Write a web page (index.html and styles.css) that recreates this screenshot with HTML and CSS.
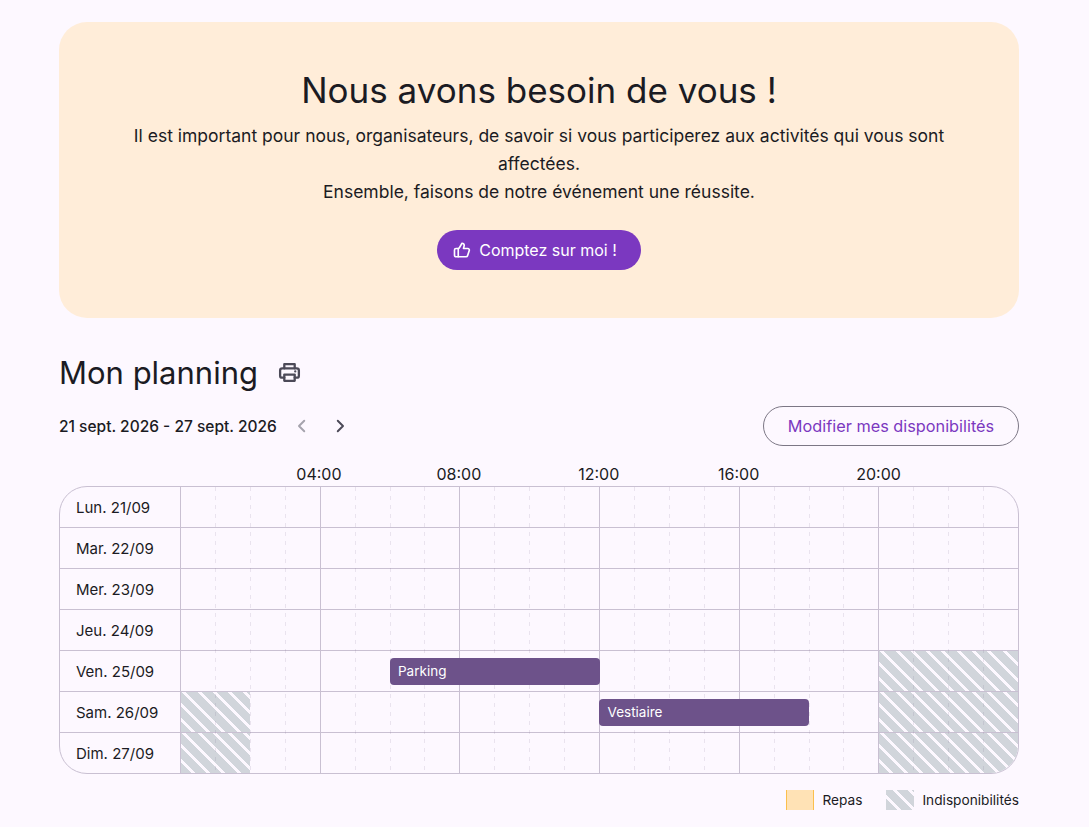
FILE: index.html
```html
<!DOCTYPE html>
<html lang="fr">
<head>
	<meta charset="utf-8" />
	<title>Mon planning</title>
	<link rel="stylesheet" href="styles.css">
</head>
<body>
	<div class="page">
		<section class="hero">
			<h2>Nous avons besoin de vous !</h2>
			<p>Il est important pour nous, organisateurs, de savoir si vous participerez aux activités qui vous sont affectées.<br>Ensemble, faisons de notre événement une réussite.</p>
			<button class="btn-primary" type="button">
				<svg viewBox="0 0 24 24" width="18" height="18" fill="none" stroke="currentColor" stroke-width="2.2" stroke-linecap="round" stroke-linejoin="round"><path d="M7 10v11"/><path d="M15 5.9 14 10h5.8a2 2 0 0 1 1.9 2.6l-2.3 7a2 2 0 0 1-1.9 1.4H4a2 2 0 0 1-2-2v-7a2 2 0 0 1 2-2h2.8a2 2 0 0 0 1.8-1.1L12 3a3.1 3.1 0 0 1 3 2.9Z"/></svg>
				Comptez sur moi !
			</button>
		</section>

		<div class="title-row">
			<h1>Mon planning</h1>
			<svg class="print" viewBox="0 0 24 24" width="25" height="25" fill="none" stroke="currentColor" stroke-width="2.2" stroke-linecap="round" stroke-linejoin="round"><path d="M7 8V4h10v4"/><path d="M7 17H5a2 2 0 0 1-2-2v-5a2 2 0 0 1 2-2h14a2 2 0 0 1 2 2v5a2 2 0 0 1-2 2h-2"/><rect x="7" y="14" width="10" height="6"/><path d="M17.5 11h.01"/></svg>
		</div>

		<div class="range-row">
			<div class="range">
				<span>21 sept. 2026 - 27 sept. 2026</span>
				<svg class="chev off" viewBox="0 0 24 24" width="18" height="18" fill="none" stroke="currentColor" stroke-width="2.6" stroke-linecap="round" stroke-linejoin="round"><path d="m15 5-7 7 7 7"/></svg>
				<svg class="chev" viewBox="0 0 24 24" width="18" height="18" fill="none" stroke="currentColor" stroke-width="2.6" stroke-linecap="round" stroke-linejoin="round"><path d="m9 5 7 7-7 7"/></svg>
			</div>
			<button class="btn-outline" type="button">Modifier mes disponibilités</button>
		</div>

		<div class="hours">
			<span>04:00</span>
			<span>08:00</span>
			<span>12:00</span>
			<span>16:00</span>
			<span>20:00</span>
		</div>

		<div class="planning">
			<div class="row">
				<div class="day">Lun. 21/09</div>
				<div class="track"></div>
			</div>
			<div class="row">
				<div class="day">Mar. 22/09</div>
				<div class="track"></div>
			</div>
			<div class="row">
				<div class="day">Mer. 23/09</div>
				<div class="track"></div>
			</div>
			<div class="row">
				<div class="day">Jeu. 24/09</div>
				<div class="track"></div>
			</div>
			<div class="row">
				<div class="day">Ven. 25/09</div>
				<div class="track">
					<div class="hatch" style="left:83.333%;width:16.667%"></div>
					<div class="shift" style="left:25%;width:25.1%">Parking</div>
				</div>
			</div>
			<div class="row">
				<div class="day">Sam. 26/09</div>
				<div class="track">
					<div class="hatch" style="left:0;width:8.333%"></div>
					<div class="hatch" style="left:83.333%;width:16.667%"></div>
					<div class="shift" style="left:50%;width:25%">Vestiaire</div>
				</div>
			</div>
			<div class="row">
				<div class="day">Dim. 27/09</div>
				<div class="track">
					<div class="hatch" style="left:0;width:8.333%"></div>
					<div class="hatch" style="left:83.333%;width:16.667%"></div>
				</div>
			</div>
			<div class="cols">
				<i></i><i></i><i></i><i></i><i class="major"></i><i></i><i></i><i></i>
				<i class="major"></i><i></i><i></i><i></i><i class="major"></i><i></i><i></i><i></i>
				<i class="major"></i><i></i><i></i><i></i><i class="major"></i><i></i><i></i><i></i>
			</div>
		</div>

		<div class="legend">
			<div class="legend-item"><span class="swatch meal"></span>Repas</div>
			<div class="legend-item"><span class="swatch off"></span>Indisponibilités</div>
		</div>
	</div>
</body>
</html>
```

FILE: styles.css
```css
* {
	box-sizing: border-box;
	margin: 0;
	padding: 0;
}
body {
	background: #fdf8ff;
	color: #1b1b23;
	font-family: "Inter", "Noto Sans", sans-serif;
}
.page {
	width: 960px;
	margin-left: 59px;
	padding-top: 22px;
}

/* bandeau */
.hero {
	height: 296px;
	padding: 45px 70px 0;
	background: #ffedd9;
	border-radius: 28px;
	text-align: center;
}
.hero h2 {
	font-size: 35px;
	line-height: 46px;
	font-weight: 400;
}
.hero p {
	margin-top: 9px;
	font-size: 17.5px;
	line-height: 28px;
}
.btn-primary {
	display: inline-flex;
	align-items: center;
	gap: 8px;
	height: 40px;
	margin-top: 24px;
	padding: 0 24px 0 16px;
	border: 0;
	border-radius: 20px;
	background: #7b38c0;
	color: #fff;
	font: 400 16px "Inter", sans-serif;
}

/* titre */
.title-row {
	display: flex;
	align-items: center;
	gap: 19px;
	margin-top: 31px;
	height: 46px;
}
.title-row h1 {
	font-size: 31px;
	font-weight: 400;
}
.print {
	color: #4c4a58;
}
.range-row {
	display: flex;
	justify-content: space-between;
	align-items: center;
	margin-top: 11px;
	height: 40px;
}
.range {
	display: flex;
	align-items: center;
	gap: 9px;
	font-size: 15.5px;
	font-weight: 500;
}
.range span {
	margin-right: 7px;
}
.chev {
	color: #4c4a58;
	margin-right: 11px;
}
.chev.off {
	color: #a5a3ad;
}
.btn-outline {
	width: 256px;
	height: 40px;
	border: 1px solid #7c7785;
	border-radius: 20px;
	background: transparent;
	color: #7b38c0;
	font: 400 16.3px "Inter", sans-serif;
}

/* heures */
.hours {
	display: grid;
	grid-template-columns: repeat(5, 139.9px);
	height: 40px;
	padding-left: 190px;
	padding-top: 18px;
	font-size: 16px;
	line-height: 20px;
}
.hours span {
	text-align: center;
}

/* planning */
.planning {
	position: relative;
	border: 1px solid #c9c0d2;
	border-radius: 28px;
	overflow: hidden;
}
.row {
	display: flex;
	height: 41px;
	border-top: 1px solid #c9c0d2;
}
.row:first-child {
	height: 40px;
	border-top: 0;
}
.day {
	position: relative;
	z-index: 1;
	display: flex;
	align-items: center;
	width: 121px;
	padding-left: 16px;
	border-right: 1px solid #c9c0d2;
	font-size: 15px;
}
.track {
	position: relative;
	flex: 1;
	margin-left: -1px;
}
.cols {
	position: absolute;
	top: 0;
	bottom: 0;
	left: 120px;
	right: 0;
	display: grid;
	grid-template-columns: repeat(24, 1fr);
	pointer-events: none;
}
.cols i {
	background: linear-gradient(rgba(120, 100, 140, .14) 50%, transparent 50%) 0 0 / 1px 9px repeat-y;
}
.cols i:first-child {
	background: none;
}
.cols .major {
	background: linear-gradient(#c9c0d2, #c9c0d2) 0 0 / 1px 100% no-repeat;
}
.hatch {
	position: absolute;
	top: 0;
	bottom: 0;
	background: repeating-linear-gradient(45deg, #d1d5db 0, #d1d5db 8px, #fdf8ff 8px, #fdf8ff 10.8px);
}
.shift {
	position: absolute;
	top: 7px;
	height: 27px;
	z-index: 1;
	padding-left: 8.5px;
	background: #6d528a;
	border-radius: 4px;
	color: #fff;
	font-size: 13.5px;
	line-height: 27px;
}

/* legende */
.legend {
	display: flex;
	justify-content: flex-end;
	gap: 24px;
	margin-top: 16px;
	font-size: 13.7px;
}
.legend-item {
	display: flex;
	align-items: center;
	gap: 8px;
}
.swatch {
	width: 28px;
	height: 20px;
}
.swatch.meal {
	background: #ffe2b5;
	border-left: 1px solid #fbbf4d;
	border-right: 1px solid #fbbf4d;
}
.swatch.off {
	background: repeating-linear-gradient(45deg, #d1d5db 0, #d1d5db 8px, #fdf8ff 8px, #fdf8ff 10.8px);
}
```
